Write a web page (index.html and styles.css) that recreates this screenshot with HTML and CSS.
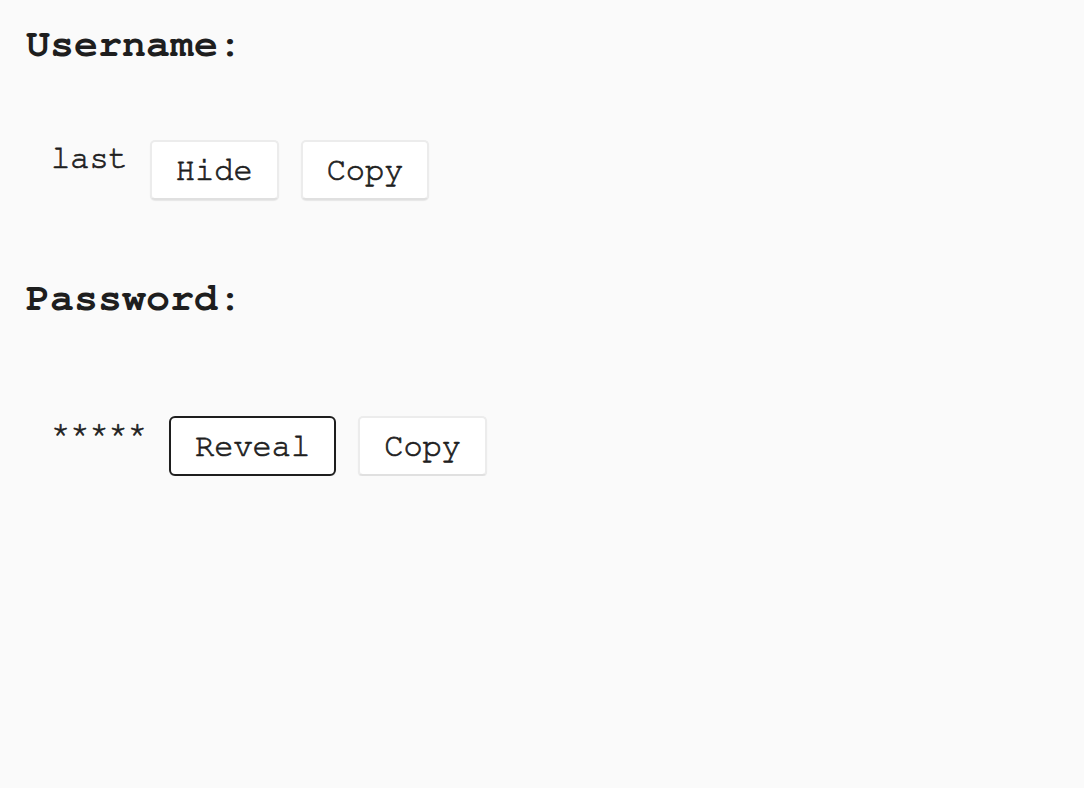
FILE: index.html
```html
<!DOCTYPE html>
<html>
<head>
<meta charset="utf-8">
<link rel="stylesheet" href="styles.css">
</head>
<body>
<section class="field">
  <h2 class="label">Username:</h2>
  <div class="row">
    <span class="value">last</span>
    <button class="btn">Hide</button>
    <button class="btn">Copy</button>
  </div>
</section>
<section class="field field-pw">
  <h2 class="label">Password:</h2>
  <div class="row row-pw">
    <span class="value">*****</span>
    <button class="btn btn-focus">Reveal</button>
    <button class="btn">Copy</button>
  </div>
</section>
</body>
</html>
```
FILE: styles.css
```css
html, body {
  margin: 0;
  padding: 0;
  background: #fafafa;
}
body {
  font-family: "Nimbus Mono PS", "Nimbus Mono L", "FreeMono", "Courier New", "Liberation Mono", monospace;
  color: #1e1e1e;
  padding-left: 26px;
}
.label {
  font-size: 40px;
  font-weight: bold;
  margin: 0;
  line-height: 45px;
}
.field {
  padding-top: 22px;
}
.field-pw {
  padding-top: 76px;
}
.row {
  display: flex;
  align-items: flex-start;
  gap: 22px;
  margin-top: 73px;
  padding-left: 25px;
}
.row-pw {
  margin-top: 95px;
}
.value {
  font-size: 32px;
  line-height: 36px;
  -webkit-text-stroke: 0.7px currentColor;
}
.btn {
  font-family: inherit;
  font-size: 32px;
  line-height: 36px;
  -webkit-text-stroke: 0.7px currentColor;
  color: #1e1e1e;
  background: #ffffff;
  border: 2px solid #ececec;
  border-bottom-color: #e0e0e0;
  border-radius: 5px;
  padding: 10px 24px;
  margin: 0;
  box-shadow: 0 1px 1px rgba(0, 0, 0, 0.08);
}
.btn-focus {
  border-color: #1e1e1e;
  border-radius: 6px;
}
```
